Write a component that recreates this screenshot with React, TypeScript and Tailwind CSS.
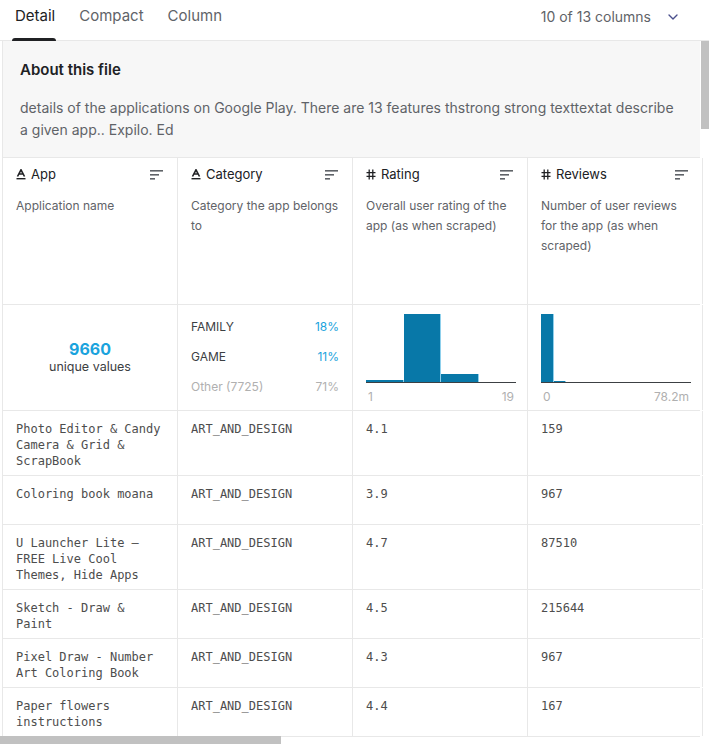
import { ChevronDown } from "lucide-react";

const ui = "font-['Inter','Roboto',sans-serif]";
const mono = "font-['DejaVu_Sans_Mono','Liberation_Mono',monospace]";

const rows = [
    { app: "Photo Editor & Candy Camera & Grid & ScrapBook", cat: "ART_AND_DESIGN", rating: "4.1", reviews: "159" },
    { app: "Coloring book moana", cat: "ART_AND_DESIGN", rating: "3.9", reviews: "967" },
    { app: "U Launcher Lite – FREE Live Cool Themes, Hide Apps", cat: "ART_AND_DESIGN", rating: "4.7", reviews: "87510" },
    { app: "Sketch - Draw & Paint", cat: "ART_AND_DESIGN", rating: "4.5", reviews: "215644" },
    { app: "Pixel Draw - Number Art Coloring Book", cat: "ART_AND_DESIGN", rating: "4.3", reviews: "967" },
    { app: "Paper flowers instructions", cat: "ART_AND_DESIGN", rating: "4.4", reviews: "167" },
];

function SortIcon() {
    return (
        <svg width="14" height="10" viewBox="0 0 14 10" className="text-[#5f6368]">
            <rect x="0" y="0" width="13" height="1.6" fill="currentColor" />
            <rect x="0" y="4" width="9" height="1.6" fill="currentColor" />
            <rect x="0" y="8" width="5" height="1.6" fill="currentColor" />
        </svg>
    );
}

function StringIcon() {
    return (
        <svg width="10" height="11" viewBox="0 0 10 11" className="text-[#202124]">
            <path d="M1.5 7.5 L5 0.8 L8.5 7.5 M3 5 H7" stroke="currentColor" strokeWidth="1.6" fill="none" />
            <rect x="0.5" y="9" width="9" height="1.4" fill="currentColor" />
        </svg>
    );
}

function HashIcon() {
    return (
        <svg width="10" height="11" viewBox="0 0 10 11" className="text-[#202124]">
            <path d="M3.2 0.5 V10.5 M6.8 0.5 V10.5 M0.5 3.6 H9.5 M0.5 7.4 H9.5" stroke="currentColor" strokeWidth="1.3" fill="none" />
        </svg>
    );
}

function HeaderCell({ icon, name, desc }: { icon: "str" | "num"; name: string; desc: string }) {
    return (
        <div className="w-[175px] shrink-0 border-r border-[#e8e8e8] px-[13px] pt-[8px]">
            <div className="flex items-center justify-between h-[18px]">
                <div className="flex items-center gap-[5px] text-[13px] text-[#202124]">
                    {icon === "str" ? <StringIcon /> : <HashIcon />}
                    <span>{name}</span>
                </div>
                <SortIcon />
            </div>
            <p className="mt-[12px] -mr-[2px] text-[12px] leading-[20px] text-[#5f6368]">{desc}</p>
        </div>
    );
}

function Histogram({ bins, left, right }: { bins: number[]; left: string; right: string }) {
    const w = 150 / bins.length;
    return (
        <div className="w-[175px] shrink-0 border-r border-[#e8e8e8] pl-[13px] pt-[10px]">
            <div className="w-[150px] h-[68px] flex items-end border-b border-[#3c4043]">
                {bins.map((h, i) => (
                    <div key={i} className="shrink-0 flex items-end h-full" style={{ width: w }}>
                        <div className="w-full bg-[#0878a8] border-r border-[#8fd0ec]" style={{ height: h }} />
                    </div>
                ))}
            </div>
            <div className="w-[150px] flex justify-between text-[12px] text-[#b0b0b0] mt-[5px] px-[2px]">
                <span>{left}</span>
                <span>{right}</span>
            </div>
        </div>
    );
}

export default function App() {
    return (
        <div className={`${ui} relative w-[709px] h-[744px] overflow-hidden bg-white`}>
            <div className="flex items-start justify-between h-[41px] border-b border-[#e8e8e8] pl-[15px] pr-[28px]">
                <div className="flex gap-[24px] text-[15px] h-full">
                    <div className="relative pt-[5px] text-[#202124]">
                        Detail
                        <div className="absolute bottom-[-1px] left-[-3px] right-[-1px] h-[3px] bg-[#202124] rounded-t" />
                    </div>
                    <div className="pt-[5px] text-[#5f6368]">Compact</div>
                    <div className="pt-[5px] text-[#5f6368]">Column</div>
                </div>
                <div className="flex items-center gap-[14px] pt-[6px] text-[14px] text-[#5f6368]">
                    <span>10 of 13 columns</span>
                    <ChevronDown size={16} strokeWidth={2} className="text-[#4a4f8c]" />
                </div>
            </div>

            <div className="ml-[2px] mr-[9px] border-l border-[#e8e8e8]">
                <div className="bg-[#f7f7f7] px-[17px] pt-[18px] pb-[16px] border-b border-[#e8e8e8]">
                    <h2 className="text-[15px] font-semibold text-[#202124]">About this file</h2>
                    <p className="mt-[15px] text-[14px] leading-[22px] text-[#5f6368]">
                        details of the applications on Google Play. There are 13 features thstrong strong texttextat describe a given app.. Expilo. Ed
                    </p>
                </div>

                <div className="flex h-[147px] border-b border-[#e8e8e8]">
                    <HeaderCell icon="str" name="App" desc="Application name" />
                    <HeaderCell icon="str" name="Category" desc="Category the app belongs to" />
                    <HeaderCell icon="num" name="Rating" desc="Overall user rating of the app (as when scraped)" />
                    <HeaderCell icon="num" name="Reviews" desc="Number of user reviews for the app (as when scraped)" />
                </div>

                <div className="flex h-[106px] border-b border-[#e8e8e8]">
                    <div className="w-[175px] shrink-0 border-r border-[#e8e8e8] flex flex-col items-center justify-center">
                        <span className="text-[16px] font-bold text-[#1aa3dd] leading-[20px]">9660</span>
                        <span className="text-[12.5px] text-[#3c4043] leading-[16px]">unique values</span>
                    </div>
                    <div className="w-[175px] shrink-0 border-r border-[#e8e8e8] px-[13px] pt-[14px] text-[12px] flex flex-col gap-[14px]">
                        <div className="flex justify-between leading-[16px]">
                            <span className="text-[#3c4043]">FAMILY</span>
                            <span className="text-[#1aa3dd]">18%</span>
                        </div>
                        <div className="flex justify-between leading-[16px]">
                            <span className="text-[#3c4043]">GAME</span>
                            <span className="text-[#1aa3dd]">11%</span>
                        </div>
                        <div className="flex justify-between leading-[16px] text-[#b0b0b0]">
                            <span>Other (7725)</span>
                            <span>71%</span>
                        </div>
                    </div>
                    <Histogram bins={[2, 68, 8, 0]} left="1" right="19" />
                    <Histogram bins={[68, 1, 0, 0, 0, 0, 0, 0, 0, 0, 0, 0]} left="0" right="78.2m" />
                </div>

                {rows.map((r, i) => (
                    <div key={i} className={`${mono} flex border-b border-[#e8e8e8] text-[12px] leading-[16px] text-[#4d4d4d]`}>
                        <div className="w-[175px] shrink-0 border-r border-[#e8e8e8] px-[13px] pt-[10px] pb-[6px] min-h-[48px]">{r.app}</div>
                        <div className="w-[175px] shrink-0 border-r border-[#e8e8e8] px-[13px] pt-[10px]">{r.cat}</div>
                        <div className="w-[175px] shrink-0 border-r border-[#e8e8e8] px-[13px] pt-[10px]">{r.rating}</div>
                        <div className="w-[175px] shrink-0 border-r border-[#e8e8e8] px-[13px] pt-[10px]">{r.reviews}</div>
                    </div>
                ))}
            </div>

            <div className="absolute right-0 top-[41px] w-[8px] h-[88px] bg-[#c1c1c1]" />
            <div className="absolute left-0 bottom-0 w-[281px] h-[8px] bg-[#c1c1c1]" />
        </div>
    );
}
